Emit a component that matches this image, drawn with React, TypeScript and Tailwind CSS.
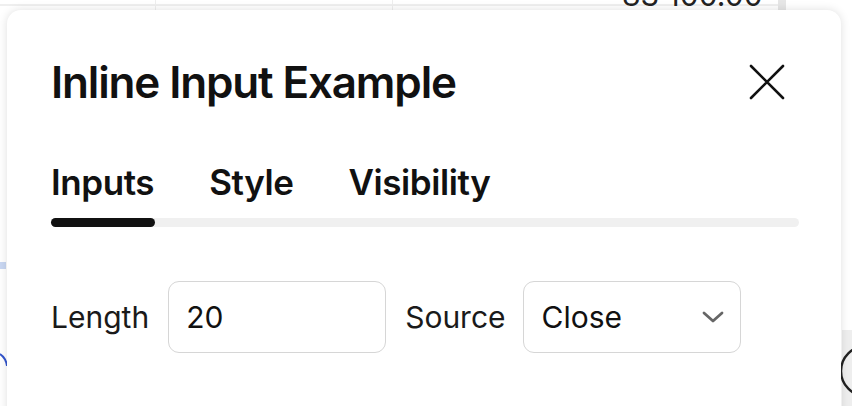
import { useState } from 'react'

const tabs = ['Inputs', 'Style', 'Visibility']

const CloseIcon = () => (
  <svg width="36" height="36" viewBox="0 0 36 36" fill="none" stroke="#111" strokeWidth="2.6" strokeLinecap="round">
    <path d="M2 2 L34 34 M34 2 L2 34" />
  </svg>
)

const Chevron = () => (
  <svg width="22" height="12" viewBox="0 0 22 12" fill="none" stroke="#666" strokeWidth="2.8" strokeLinecap="round" strokeLinejoin="round">
    <path d="M2 2 L11 10 L20 2" />
  </svg>
)

const Backdrop = () => (
  <div className="absolute inset-0 pointer-events-none">
    <div className="absolute left-0 top-[4px] w-[778px] h-[2px] bg-[#efefef]" />
    <div className="absolute left-[155px] top-0 w-px h-[20px] bg-[#eeeeee]" />
    <div className="absolute left-[392px] top-0 w-px h-[20px] bg-[#eeeeee]" />
    <div className="absolute left-[778px] top-0 w-[8px] h-[14px] bg-[#e6e6e6]" />
    <div className="absolute left-[622px] top-[-22px] text-[30px] leading-[34px] text-[#222]">83 100.00</div>
    <div className="absolute left-0 top-[262px] w-[6px] h-[7px] bg-[#c9d7f2]" />
    <svg className="absolute left-0 top-[350px]" width="8" height="30" viewBox="0 0 8 30" fill="none" stroke="#3355cc" strokeWidth="2">
      <path d="M0 4 Q6 8 7 16" />
    </svg>
    <div className="absolute left-[842px] top-[330px] w-[10px] h-[76px] bg-[#eeeeee]" />
    <svg className="absolute left-[838px] top-[343px]" width="56" height="56" viewBox="0 0 56 56" fill="none" stroke="#222" strokeWidth="2.4">
      <circle cx="28" cy="28" r="25" />
      <path d="M16 16 L40 40 M40 16 L16 40" />
    </svg>
  </div>
)

export default function App() {
  const [active, setActive] = useState(0)
  const [length, setLength] = useState('20')

  return (
    <div className="relative w-[852px] h-[406px] overflow-hidden bg-white" style={{ fontFamily: 'Inter, "Noto Sans", sans-serif' }}>
      <Backdrop />
      <div className="relative ml-[7px] mt-[10px] w-[834px] h-[420px] bg-white rounded-[14px] shadow-[0_0_10px_rgba(0,0,0,0.13)] px-[44px] pt-[46px]">
        <div className="flex items-center justify-between">
          <h2 className="text-[44px] leading-[52px] font-semibold tracking-[-0.026em] text-[#111]">Inline Input Example</h2>
          <button className="mr-[12px] flex items-center justify-center">
            <CloseIcon />
          </button>
        </div>

        <div className="mt-[54px] flex gap-[55px]">
          {tabs.map((t, i) => (
            <button
              key={t}
              onClick={() => setActive(i)}
              className="text-[35px] leading-[40px] font-semibold tracking-[-0.012em] text-[#111]"
            >
              {t}
            </button>
          ))}
        </div>
        <div className="mt-[16px] h-[9px] w-[748px] rounded-full bg-[#f0f0f0] flex">
          <div className={`h-[9px] w-[104px] rounded-full bg-[#111] ${active === 0 ? '' : 'invisible'}`} />
        </div>

        <div className="mt-[54px] flex items-center">
          <span className="text-[30px] text-[#1a1a1a]">Length</span>
          <input
            value={length}
            onChange={e => setLength(e.target.value)}
            className="ml-[19px] w-[218px] h-[72px] rounded-[11px] border-[1.5px] border-[#d6d6d6] px-[17px] text-[30px] text-[#111] outline-none"
          />
          <span className="ml-[19px] text-[30px] text-[#1a1a1a]">Source</span>
          <div className="ml-[17px] w-[218px] h-[72px] rounded-[11px] border-[1.5px] border-[#d6d6d6] pl-[18px] pr-[16px] flex items-center justify-between">
            <span className="text-[30px] text-[#111]">Close</span>
            <Chevron />
          </div>
        </div>
      </div>
    </div>
  )
}
